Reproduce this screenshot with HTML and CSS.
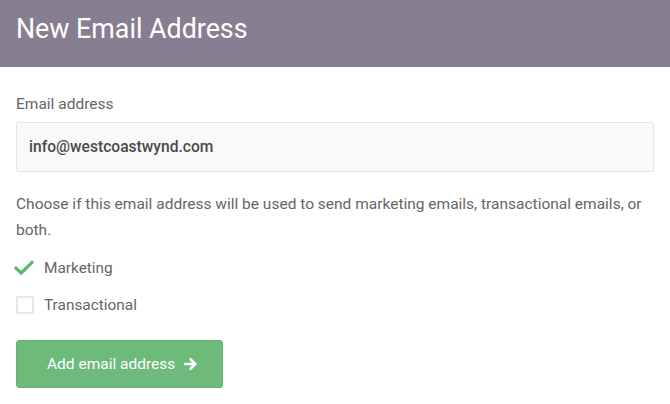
FILE: index.html
```html
<!DOCTYPE html>
<html>
<head>
<meta charset="utf-8">
<link rel="stylesheet" href="styles.css">
</head>
<body>
<header class="header">
  <h1 class="title">New Email Address</h1>
</header>
<main class="content">
  <label class="field-label" for="email">Email address</label>
  <div class="input">info@westcoastwynd.com</div>
  <p class="hint">Choose if this email address will be used to send marketing emails, transactional emails, or both.</p>
  <div class="option">
    <span class="box checked">
      <svg width="20" height="16" viewBox="0 0 20 16"><path d="M2 8.2 L7.2 13 L18 2.5" fill="none" stroke="#5cb86e" stroke-width="3.2" stroke-linecap="square" stroke-linejoin="miter"/></svg>
    </span>
    <span class="option-text">Marketing</span>
  </div>
  <div class="option">
    <span class="box"></span>
    <span class="option-text">Transactional</span>
  </div>
  <button class="btn">Add email address
    <svg class="arrow" width="14" height="12" viewBox="0 0 14 12"><path d="M1 6 H11 M6.5 1.3 L11.3 6 L6.5 10.7" fill="none" stroke="#fff" stroke-width="2.6" stroke-linecap="round" stroke-linejoin="round"/></svg>
  </button>
</main>
</body>
</html>
```
FILE: styles.css
```css
* { box-sizing: border-box; }
body {
  margin: 0;
  font-family: Roboto, "Liberation Sans", sans-serif;
  background: #fff;
  color: #666;
}
.header {
  height: 67px;
  background: #877f91;
  padding: 13px 16px 0;
}
.title {
  margin: 0;
  font-size: 26.8px;
  font-weight: 400;
  color: #fff;
  line-height: normal;
}
.content {
  padding: 27px 16px 16px;
  display: flex;
  flex-direction: column;
  align-items: flex-start;
}
.field-label {
  font-size: 15.5px;
  line-height: 20px;
  color: #666;
}
.input {
  margin-top: 8px;
  width: 100%;
  height: 50px;
  background: #f9f9f9;
  border: 1px solid #e6e6e6;
  border-radius: 2px;
  padding: 0 12px;
  display: flex;
  align-items: center;
  font-size: 15.6px;
  font-weight: 500;
  color: #4a4a4a;
}
.hint {
  margin: 19px 0 15px;
  font-size: 15.5px;
  line-height: 26px;
  color: #666;
}
.option {
  display: flex;
  align-items: center;
  gap: 10px;
  height: 20px;
  margin-bottom: 17px;
}
.box {
  width: 18px;
  height: 18px;
  border: 2px solid #e8e8e8;
  border-radius: 1px;
  display: flex;
  align-items: center;
  justify-content: center;
}
.box.checked {
  border: none;
}
.box.checked svg {
  flex: none;
  margin-left: -2px;
}
.option-text {
  font-size: 15.4px;
  line-height: 20px;
  color: #666;
}
.btn {
  margin-top: 8px;
  height: 48px;
  padding: 0 24px 0 30px;
  background: #6dba7a;
  border: 1px solid #66b373;
  border-radius: 3px;
  color: #fff;
  font-family: Roboto, "Liberation Sans", sans-serif;
  font-size: 15.5px;
  display: flex;
  align-items: center;
  gap: 9px;
}
.arrow { flex: none; }
```
